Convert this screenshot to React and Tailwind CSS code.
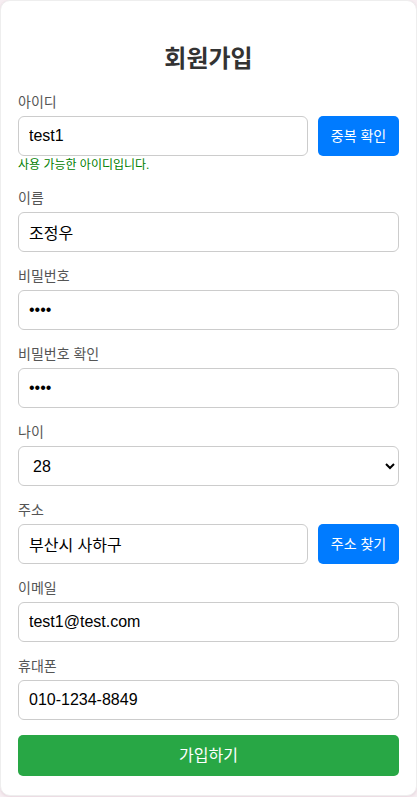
import React, { useState } from "react";

const font = { fontFamily: '"Liberation Sans", "Noto Sans CJK KR", sans-serif' };

const inputCls =
  "w-full h-[40px] pl-[10px] pr-2 border border-[#ccc] rounded-[6px] text-[16px] text-black bg-white outline-none";

const Field = ({ label, children, help }) => (
  <div className="mb-[15px]">
    <label className="block text-[14px] leading-[19px] text-[#555] mb-[4px]">{label}</label>
    {children}
    {help && <p className="text-[12px] leading-[17px] text-[#008000] mt-[1px]">{help}</p>}
  </div>
);

const App = () => {
  const [form, setForm] = useState({
    userId: "test1",
    name: "조정우",
    password: "1234",
    confirm: "1234",
    age: "28",
    address: "부산시 사하구",
    email: "test1@test.com",
    phone: "010-1234-8849",
  });

  const handleChange = (e) => setForm({ ...form, [e.target.name]: e.target.value });

  const ages = [];
  for (let i = 1; i <= 100; i++) ages.push(i);

  return (
    <div className="min-h-screen bg-[#f6eef2]" style={font}>
      <div className="w-[417px] h-[796px] bg-white rounded-[10px] border border-[#eee] shadow-[0_1px_3px_rgba(200,150,170,0.3)] px-[17px] pt-[42px]">
        <h2 className="text-center text-[24px] leading-[32px] font-bold text-[#333] mb-[18px]">회원가입</h2>

        <form onSubmit={(e) => e.preventDefault()}>
          <Field label="아이디" help="사용 가능한 아이디입니다.">
            <div className="flex gap-[10px]">
              <input name="userId" value={form.userId} onChange={handleChange} className={inputCls} />
              <button type="button" className="shrink-0 w-[81px] h-[40px] bg-[#007bff] text-white text-[14px] rounded-[5px]">
                중복 확인
              </button>
            </div>
          </Field>

          <Field label="이름">
            <input name="name" value={form.name} onChange={handleChange} className={inputCls} />
          </Field>

          <Field label="비밀번호">
            <input name="password" type="password" value={form.password} onChange={handleChange} className={inputCls} />
          </Field>

          <Field label="비밀번호 확인">
            <input name="confirm" type="password" value={form.confirm} onChange={handleChange} className={inputCls} />
          </Field>

          <Field label="나이">
            <select name="age" value={form.age} onChange={handleChange} className={inputCls}>
              {ages.map((a) => (
                <option key={a} value={a}>{a}</option>
              ))}
            </select>
          </Field>

          <Field label="주소">
            <div className="flex gap-[10px]">
              <input name="address" value={form.address} onChange={handleChange} className={inputCls} />
              <button type="button" className="shrink-0 w-[81px] h-[40px] bg-[#007bff] text-white text-[14px] rounded-[5px]">
                주소 찾기
              </button>
            </div>
          </Field>

          <Field label="이메일">
            <input name="email" value={form.email} onChange={handleChange} className={inputCls} />
          </Field>

          <Field label="휴대폰">
            <input name="phone" value={form.phone} onChange={handleChange} className={inputCls} />
          </Field>

          <button type="submit" className="w-full h-[41px] bg-[#28a745] text-white text-[16px] rounded-[5px]">
            가입하기
          </button>
        </form>
      </div>
    </div>
  );
};

export default App;
